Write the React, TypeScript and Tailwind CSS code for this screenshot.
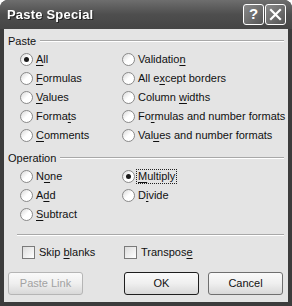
import React from "react";

type Opt = { label: React.ReactNode; checked?: boolean; focus?: boolean };

function U({ children }: { children: React.ReactNode }) {
  return <span className="underline underline-offset-[2px] decoration-[1px]">{children}</span>;
}

function Radio({ label, checked, focus }: Opt) {
  return (
    <div className="flex items-center h-[19px] whitespace-nowrap">
      <div className="shrink-0 w-[13px] h-[13px] rounded-full border border-[#8a8a8a] bg-gradient-to-br from-[#d8d8d8] via-white to-white flex items-center justify-center">
        {checked && <div className="w-[5px] h-[5px] rounded-full bg-[#1a1a1a]" />}
      </div>
      <span
        className={
          "ml-[2px] px-[1px] leading-[13px] " +
          (focus ? "outline outline-1 outline-dotted outline-[#222]" : "")
        }
      >
        {label}
      </span>
    </div>
  );
}

function Check({ label }: { label: React.ReactNode }) {
  return (
    <div className="flex items-center h-[19px] whitespace-nowrap">
      <div className="shrink-0 w-[13px] h-[13px] border border-[#7a7a7a] bg-gradient-to-br from-[#dcdcdc] to-white" />
      <span className="ml-[4px]">{label}</span>
    </div>
  );
}

function GroupHead({ title }: { title: string }) {
  return (
    <div className="flex items-center h-[14px]">
      <span className="pr-[4px]">{title}</span>
      <div className="flex-1 border-t border-[#a8a8a8] border-b border-b-white h-[2px]" />
    </div>
  );
}

function Btn({ children, disabled, def }: { children: React.ReactNode; disabled?: boolean; def?: boolean }) {
  return (
    <div
      className={
        "w-[75px] h-[23px] rounded-[3px] flex items-center justify-center bg-gradient-to-b from-[#fafafa] via-[#efefef] to-[#d8d8d8] " +
        (def ? "border border-[#1e1e1e] " : "border border-[#6f6f6f] ") +
        (disabled ? "text-[#a2a2a2] border-[#b5b5b5]" : "text-[#111]")
      }
    >
      {children}
    </div>
  );
}

export default function App() {
  return (
    <div
      className="w-[292px] h-[306px] bg-[#3c3c3c] rounded-t-[8px] flex flex-col text-[11px] text-[#111] overflow-hidden"
      style={{ fontFamily: '"Liberation Sans", Arial, sans-serif' }}
    >
      {/* title bar */}
      <div className="h-[29px] shrink-0 flex items-center bg-gradient-to-b from-[#6e6e6e] via-[#4e4e4e] to-[#454545] pl-[7px] pr-[6px]">
        <span className="text-white font-bold text-[13px] tracking-[0.2px] drop-shadow-[1px_1px_0_#222]">
          Paste Special
        </span>
        <div className="ml-auto flex gap-[1px]">
          <div className="w-[21px] h-[21px] rounded-[3px] border border-white bg-gradient-to-br from-[#8a8a8a] to-[#555] flex items-center justify-center text-white font-bold text-[15px]">
            ?
          </div>
          <div className="w-[21px] h-[21px] rounded-[3px] border border-white bg-gradient-to-br from-[#8a8a8a] to-[#555] flex items-center justify-center">
            <svg width="13" height="13" viewBox="0 0 13 13">
              <path d="M2 2 L11 11 M11 2 L2 11" stroke="white" strokeWidth="2.2" strokeLinecap="square" />
            </svg>
          </div>
        </div>
      </div>

      {/* body */}
      <div className="flex-1 mx-[4px] mb-[4px] bg-[#e4e4e4] px-[4px] pt-[5px] flex flex-col">
        <GroupHead title="Paste" />
        <div className="grid grid-cols-[102px_1fr] pl-[12px] mt-[2px]">
          <div className="flex flex-col">
            <Radio checked label={<><U>A</U>ll</>} />
            <Radio label={<><U>F</U>ormulas</>} />
            <Radio label={<><U>V</U>alues</>} />
            <Radio label={<>Forma<U>t</U>s</>} />
            <Radio label={<><U>C</U>omments</>} />
          </div>
          <div className="flex flex-col">
            <Radio label={<>Validatio<U>n</U></>} />
            <Radio label={<>All e<U>x</U>cept borders</>} />
            <Radio label={<>Column <U>w</U>idths</>} />
            <Radio label={<>Fo<U>r</U>mulas and number formats</>} />
            <Radio label={<>Val<U>u</U>es and number formats</>} />
          </div>
        </div>

        <div className="mt-[6px]">
          <GroupHead title="Operation" />
        </div>
        <div className="grid grid-cols-[102px_1fr] pl-[12px] mt-[2px]">
          <div className="flex flex-col">
            <Radio label={<>N<U>o</U>ne</>} />
            <Radio label={<>A<U>d</U>d</>} />
            <Radio label={<><U>S</U>ubtract</>} />
          </div>
          <div className="flex flex-col">
            <Radio checked focus label={<><U>M</U>ultiply</>} />
            <Radio label={<>D<U>i</U>vide</>} />
          </div>
        </div>

        <div className="mt-[10px] ml-[9px] border-t border-[#a8a8a8] border-b border-b-white" />

        <div className="grid grid-cols-[102px_1fr] pl-[14px] mt-[7px]">
          <Check label={<>Skip <U>b</U>lanks</>} />
          <Check label={<>Transpos<U>e</U></>} />
        </div>

        <div className="flex mt-[10px]">
          <Btn disabled>Paste Link</Btn>
          <div className="ml-[41px]">
            <Btn def>OK</Btn>
          </div>
          <div className="ml-[9px]">
            <Btn>Cancel</Btn>
          </div>
        </div>
      </div>
    </div>
  );
}
